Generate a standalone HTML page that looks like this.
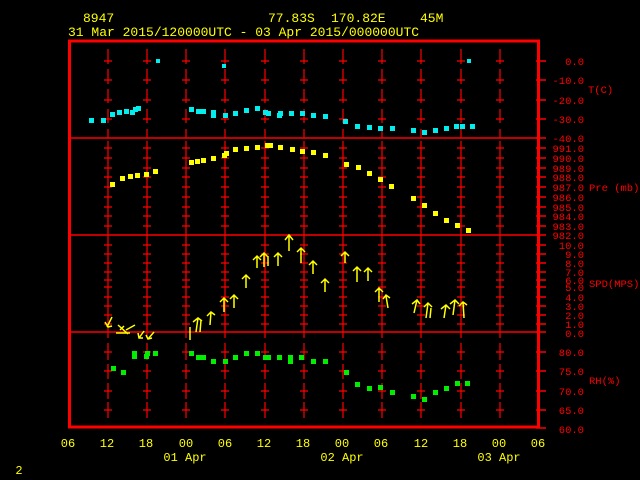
<!DOCTYPE html>
<html><head><meta charset="utf-8"><style>
html,body{margin:0;padding:0;background:#000;width:640px;height:480px;overflow:hidden}
svg{display:block}
text{font-family:"Liberation Mono",monospace}
</style></head><body>
<svg width="640" height="480" viewBox="0 0 640 480" xmlns="http://www.w3.org/2000/svg">
<rect width="640" height="480" fill="#000"/>
<defs>
<g id="col" stroke="#f00" stroke-width="1.2" fill="none">
<path d="M0 49V64M0 69V84M0 89V103M0 109V123M0 129V138"/>
<path d="M0 141V338"/>
<path d="M0 343V360M0 364V379M0 383V399M0 402V418"/>
<path d="M-4 61H4M-4 80H4M-4 100H4M-4 119H4M-4 148H4M-4 158H4M-4 168H4M-4 177H4M-4 187H4M-4 197H4M-4 207H4M-4 216H4M-4 226H4M-4 245H4M-4 254H4M-4 263H4M-4 272H4M-4 280H4M-4 287H4M-4 297H4M-4 306H4M-4 315H4M-4 324H4M-4 352H4M-4 371H4M-4 391H4M-4 410H4"/>
</g>
</defs>
<use href="#col" x="108"/><use href="#col" x="147"/><use href="#col" x="186"/><use href="#col" x="225"/><use href="#col" x="265"/><use href="#col" x="304"/><use href="#col" x="343"/><use href="#col" x="382"/><use href="#col" x="421"/><use href="#col" x="461"/><use href="#col" x="500"/>
<g stroke="#f00" stroke-width="1.4">
<path d="M70 138H540M70 235H540M70 332H540"/>
<path d="M536 61H546M536 80H546M536 100H546M536 119H546M536 138H546M536 148H546M536 158H546M536 168H546M536 177H546M536 187H546M536 197H546M536 207H546M536 216H546M536 226H546M536 235H546M536 245H546M536 254H546M536 263H546M536 272H546M536 280H546M536 287H546M536 297H546M536 306H546M536 315H546M536 324H546M536 332H546M536 352H546M536 371H546M536 391H546M536 410H546M536 428H546"/>
</g>
<rect x="69.5" y="41" width="469" height="386" fill="none" stroke="#f00" stroke-width="3"/>
<g fill="#ff0" font-size="13">
<text x="83" y="22">8947</text>
<text x="268" y="22">77.83S</text>
<text x="331" y="22">170.82E</text>
<text x="420" y="22">45M</text>
<text x="68" y="36">31 Mar 2015/120000UTC - 03 Apr 2015/000000UTC</text>
</g>
<g fill="#f00" font-size="10.5" text-anchor="end">
<text x="584" y="65">0.0</text><text x="584" y="84">-10.0</text><text x="584" y="104">-20.0</text><text x="584" y="123">-30.0</text><text x="584" y="142">-40.0</text>
<text x="584" y="152">991.0</text><text x="584" y="162">990.0</text><text x="584" y="172">989.0</text><text x="584" y="181">988.0</text><text x="584" y="191">987.0</text><text x="584" y="201">986.0</text><text x="584" y="211">985.0</text><text x="584" y="220">984.0</text><text x="584" y="230">983.0</text><text x="584" y="239">982.0</text>
<text x="584" y="249">10.0</text><text x="584" y="258">9.0</text><text x="584" y="267">8.0</text><text x="584" y="276">7.0</text><text x="584" y="284">6.0</text><text x="584" y="291">5.0</text><text x="584" y="301">4.0</text><text x="584" y="310">3.0</text><text x="584" y="319">2.0</text><text x="584" y="328">1.0</text><text x="584" y="337">0.0</text>
<text x="584" y="356">80.0</text><text x="584" y="375">75.0</text><text x="584" y="395">70.0</text><text x="584" y="414">65.0</text><text x="584" y="433">60.0</text>
</g>
<g fill="#f00" font-size="10.5">
<text x="588" y="93">T(C)</text><text x="589" y="191">Pre (mb)</text><text x="589" y="287">SPD(MPS)</text><text x="589" y="384">RH(%)</text>
</g>
<g fill="#ff0" font-size="12" text-anchor="middle">
<text x="68" y="447">06</text><text x="107" y="447">12</text><text x="146" y="447">18</text><text x="186" y="447">00</text><text x="225" y="447">06</text><text x="264" y="447">12</text><text x="303" y="447">18</text><text x="342" y="447">00</text><text x="381" y="447">06</text><text x="421" y="447">12</text><text x="460" y="447">18</text><text x="499" y="447">00</text><text x="538" y="447">06</text>
<text x="185" y="461">01 Apr</text><text x="342" y="461">02 Apr</text><text x="499" y="461">03 Apr</text>
<text x="19" y="474">2</text>
</g>
<g fill="#0ee">
<rect x="89" y="118" width="5" height="5"/><rect x="101" y="118" width="5" height="5"/><rect x="110" y="112" width="5" height="5"/><rect x="117" y="110" width="5" height="5"/><rect x="124" y="109" width="5" height="5"/><rect x="130" y="110" width="5" height="5"/><rect x="133" y="107" width="5" height="5"/><rect x="136" y="106" width="5" height="5"/><rect x="156" y="59" width="4" height="4"/><rect x="222" y="64" width="4" height="4"/><rect x="467" y="59" width="4" height="4"/>
<rect x="189" y="107" width="5" height="5"/><rect x="196" y="109" width="5" height="5"/><rect x="201" y="109" width="5" height="5"/><rect x="211" y="110" width="5" height="5"/><rect x="211" y="113" width="5" height="5"/><rect x="223" y="113" width="5" height="5"/><rect x="233" y="111" width="5" height="5"/><rect x="244" y="108" width="5" height="5"/><rect x="255" y="106" width="5" height="5"/><rect x="263" y="110" width="5" height="5"/><rect x="266" y="111" width="5" height="5"/><rect x="278" y="111" width="5" height="5"/><rect x="277" y="113" width="5" height="5"/><rect x="289" y="111" width="5" height="5"/><rect x="300" y="111" width="5" height="5"/><rect x="311" y="113" width="5" height="5"/><rect x="323" y="114" width="5" height="5"/>
<rect x="343" y="119" width="5" height="5"/><rect x="355" y="124" width="5" height="5"/><rect x="367" y="125" width="5" height="5"/><rect x="378" y="126" width="5" height="5"/><rect x="390" y="126" width="5" height="5"/><rect x="411" y="128" width="5" height="5"/><rect x="422" y="130" width="5" height="5"/><rect x="433" y="128" width="5" height="5"/><rect x="444" y="126" width="5" height="5"/><rect x="454" y="124" width="5" height="5"/><rect x="460" y="124" width="5" height="5"/><rect x="470" y="124" width="5" height="5"/>
</g>
<g fill="#ff0">
<rect x="110" y="182" width="5" height="5"/><rect x="120" y="176" width="5" height="5"/><rect x="128" y="174" width="5" height="5"/><rect x="135" y="173" width="5" height="5"/><rect x="144" y="172" width="5" height="5"/><rect x="153" y="169" width="5" height="5"/><rect x="189" y="160" width="5" height="5"/><rect x="195" y="159" width="5" height="5"/><rect x="201" y="158" width="5" height="5"/><rect x="211" y="156" width="5" height="5"/><rect x="222" y="153" width="5" height="5"/><rect x="224" y="151" width="5" height="5"/><rect x="233" y="147" width="5" height="5"/><rect x="244" y="146" width="5" height="5"/><rect x="255" y="145" width="5" height="5"/><rect x="265" y="143" width="5" height="5"/><rect x="268" y="143" width="5" height="5"/><rect x="278" y="145" width="5" height="5"/><rect x="290" y="147" width="5" height="5"/><rect x="300" y="149" width="5" height="5"/><rect x="311" y="150" width="5" height="5"/><rect x="323" y="153" width="5" height="5"/>
<rect x="344" y="162" width="5" height="5"/><rect x="356" y="165" width="5" height="5"/><rect x="367" y="171" width="5" height="5"/><rect x="378" y="177" width="5" height="5"/><rect x="389" y="184" width="5" height="5"/><rect x="411" y="196" width="5" height="5"/><rect x="422" y="203" width="5" height="5"/><rect x="433" y="211" width="5" height="5"/><rect x="444" y="218" width="5" height="5"/><rect x="455" y="223" width="5" height="5"/><rect x="466" y="228" width="5" height="5"/>
</g>
<g fill="#0e0">
<rect x="111" y="366" width="5" height="5"/><rect x="121" y="370" width="5" height="5"/><rect x="132" y="351" width="5" height="5"/><rect x="132" y="354" width="5" height="5"/><rect x="145" y="351" width="5" height="5"/><rect x="144" y="354" width="5" height="5"/><rect x="153" y="351" width="5" height="5"/><rect x="189" y="351" width="5" height="5"/><rect x="196" y="355" width="5" height="5"/><rect x="201" y="355" width="5" height="5"/><rect x="211" y="359" width="5" height="5"/><rect x="223" y="359" width="5" height="5"/><rect x="233" y="355" width="5" height="5"/><rect x="244" y="351" width="5" height="5"/><rect x="255" y="351" width="5" height="5"/><rect x="263" y="355" width="5" height="5"/><rect x="266" y="355" width="5" height="5"/><rect x="277" y="355" width="5" height="5"/><rect x="288" y="355" width="5" height="5"/><rect x="288" y="359" width="5" height="5"/><rect x="299" y="355" width="5" height="5"/><rect x="311" y="359" width="5" height="5"/><rect x="323" y="359" width="5" height="5"/>
<rect x="344" y="370" width="5" height="5"/><rect x="355" y="382" width="5" height="5"/><rect x="367" y="386" width="5" height="5"/><rect x="378" y="385" width="5" height="5"/><rect x="390" y="390" width="5" height="5"/><rect x="411" y="394" width="5" height="5"/><rect x="422" y="397" width="5" height="5"/><rect x="433" y="390" width="5" height="5"/><rect x="444" y="386" width="5" height="5"/><rect x="455" y="381" width="5" height="5"/><rect x="465" y="381" width="5" height="5"/>
</g>
<g stroke="#ff0" stroke-width="1.5" fill="none">
<path d="M112 317L107 327M105 322L108 327L112 326"/>
<path d="M118 325L128 334M116 333H130M126 330L135 325M120 330L124 326"/>
<path d="M139 338L144 331M138 333L139 338L143 338M148 339L154 332M146 335L148 339L152 338"/>
<path d="M190 327V340"/>
<path d="M196 332L198 318M193 322L198 318L202 321M200 332L201 320"/>
<path d="M210 325L211 312M207 316L211 312L215 315"/>
<path d="M224 312V298M220 302L224 298L228 302"/>
<path d="M234 308V295M230 299L234 295L238 299"/>
<path d="M246 288V275M242 279L246 275L250 279"/>
<path d="M257 268V256M253 260L257 256L261 260"/>
<path d="M264 267V253M260 257L264 253L268 257M268 266V256"/>
<path d="M278 266V253M274 257L278 253L282 257"/>
<path d="M289 251V235M285 240L289 235L293 240"/>
<path d="M301 263V248M297 252L301 248L305 252"/>
<path d="M313 274V261M309 265L313 261L317 265"/>
<path d="M325 292V279M321 283L325 279L329 283"/>
<path d="M345 263V252M341 256L345 252L349 256"/>
<path d="M357 282V267M353 271L357 267L361 271"/>
<path d="M368 281V268M364 272L368 268L372 272"/>
<path d="M379 302V288M375 292L379 288L383 292"/>
<path d="M388 308L386 296M383 299L386 295L390 298"/>
<path d="M414 313L417 300M412 304L417 300L420 304"/>
<path d="M426 318L428 303M424 307L428 303L432 307M430 318L431 308"/>
<path d="M444 318L446 305M441 309L446 305L450 309"/>
<path d="M453 315L455 300M450 304L455 300L459 304"/>
<path d="M464 318L463 302M459 306L463 302L467 305"/>
</g>
</svg>
</body></html>
